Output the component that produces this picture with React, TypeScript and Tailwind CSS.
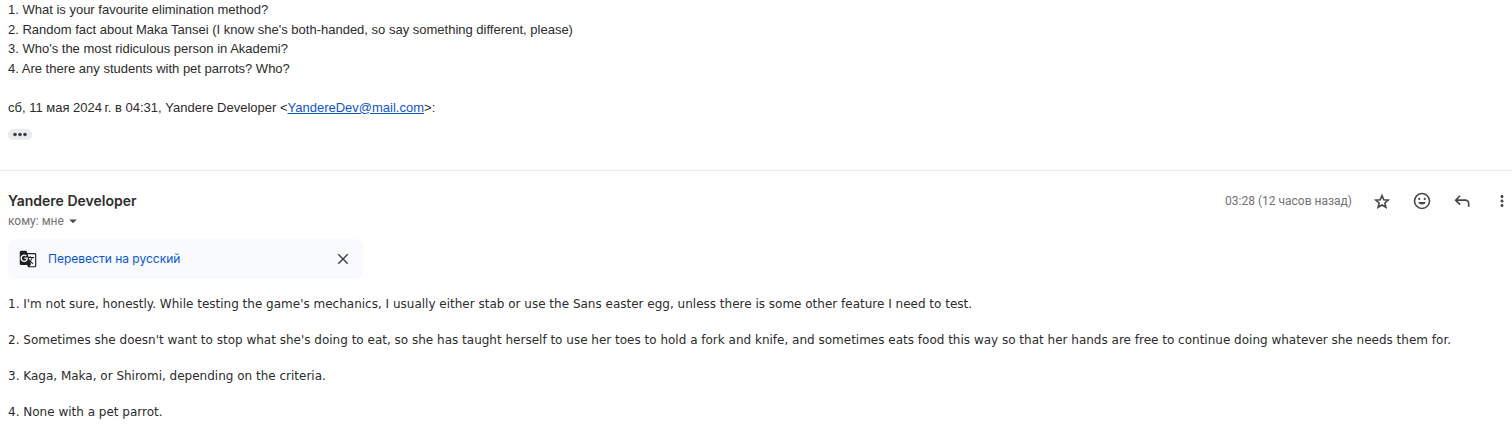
import type { ReactNode } from "react";
import { MdArrowDropDown, MdClose, MdGTranslate, MdMoreVert } from "react-icons/md";

const questions = [
  "1. What is your favourite elimination method?",
  "2. Random fact about Maka Tansei (I know she's both-handed, so say something different, please)",
  "3. Who's the most ridiculous person in Akademi?",
  "4. Are there any students with pet parrots? Who?",
];

const answers = [
  "1. I'm not sure, honestly. While testing the game's mechanics, I usually either stab or use the Sans easter egg, unless there is some other feature I need to test.",
  "2. Sometimes she doesn't want to stop what she's doing to eat, so she has taught herself to use her toes to hold a fork and knife, and sometimes eats food this way so that her hands are free to continue doing whatever she needs them for.",
  "3. Kaga, Maka, or Shiromi, depending on the criteria.",
  "4. None with a pet parrot.",
];

function IconButton({ label, children }: { label: string; children: ReactNode }) {
  return (
    <button type="button" aria-label={label} className="flex size-5 items-center justify-center text-[#444746]">
      {children}
    </button>
  );
}

function StarIcon() {
  return (
    <svg viewBox="0 0 20 20" className="size-5" fill="none" stroke="currentColor" strokeWidth="1.6" aria-hidden="true">
      <path d="M10 4.6l1.8 4.1 4.4.4-3.3 2.9 1 4.3-3.9-2.3-3.9 2.3 1-4.3-3.3-2.9 4.4-.4Z" />
    </svg>
  );
}

function SmileIcon() {
  return (
    <svg viewBox="0 0 24 24" className="size-5" fill="currentColor" aria-hidden="true">
      <circle cx="12" cy="12" r="9" fill="none" stroke="currentColor" strokeWidth="1.9" />
      <circle cx="8.7" cy="9.5" r="1.3" />
      <circle cx="15.3" cy="9.5" r="1.3" />
      <path d="M7.4 13.3h9.2a4.8 4.2 0 0 1-9.2 0Z" />
    </svg>
  );
}

function ReplyIcon() {
  return (
    <svg viewBox="0 0 24 24" className="size-5" fill="currentColor" aria-hidden="true">
      <path d="M19 19v-4a3 3 0 0 0-3-3H6.825l3.6 3.6L9 17l-6-6 6-6 1.425 1.4-3.6 3.6H16a5 5 0 0 1 5 5v4h-2Z" />
    </svg>
  );
}

function QuotedMessage() {
  return (
    <section className="px-2 pb-[30px] font-['Liberation_Sans',Arial,sans-serif] text-[13px] leading-normal">
      {questions.map((q) => (
        <p key={q}>{q}</p>
      ))}
      <br />
      <p>
        сб, 11 мая 2024&#8239;г. в 04:31, Yandere Developer &lt;
        <a href="mailto:YandereDev@mail.com" className="text-[#1155cc] underline">
          YandereDev@mail.com
        </a>
        &gt;:
      </p>
      <button
        type="button"
        aria-label="Показать скрытый текст"
        className="mt-3 flex h-[11px] w-6 items-center justify-center rounded-full bg-[#e8eaed] text-[#3c4043]"
      >
        <svg viewBox="0 0 16 5" className="h-[5px] w-4" fill="currentColor" aria-hidden="true">
          <circle cx="3" cy="2.5" r="1.8" />
          <circle cx="8" cy="2.5" r="1.8" />
          <circle cx="13" cy="2.5" r="1.8" />
        </svg>
      </button>
    </section>
  );
}

function MessageHeader() {
  return (
    <header className="flex items-start justify-between pt-5 pl-2">
      <div>
        <h3 className="text-sm leading-5 font-semibold text-[#2e2e2e]">Yandere Developer</h3>
        <button type="button" className="flex h-5 items-center font-[Roboto,sans-serif] text-xs text-[#737373]">
          кому: мне
          <MdArrowDropDown className="size-[18px] text-[#444746]" />
        </button>
      </div>
      <div className="flex items-center gap-5">
        <time className="font-[Roboto,sans-serif] text-xs leading-5 text-[#737373]">03:28 (12 часов назад)</time>
        <IconButton label="Пометить">
          <StarIcon />
        </IconButton>
        <IconButton label="Добавить реакцию">
          <SmileIcon />
        </IconButton>
        <IconButton label="Ответить">
          <ReplyIcon />
        </IconButton>
        <IconButton label="Ещё">
          <MdMoreVert className="size-[18px]" />
        </IconButton>
      </div>
    </header>
  );
}

export default function App() {
  return (
    <main className="overflow-x-hidden bg-white font-[Inter,sans-serif] text-[#2c2c2c]">
      <QuotedMessage />
      <article className="border-t border-[#ebebeb]">
        <MessageHeader />
        <div className="mt-2 ml-2 flex h-10 max-w-[355px] items-center rounded-lg bg-[#f8fafd] px-[11px]">
          <MdGTranslate className="size-[18px] text-[#1f1f1f]" />
          <button type="button" className="ml-[11px] text-xs text-[#0b57d0]">
            Перевести на русский
          </button>
          <button type="button" aria-label="Закрыть" className="ml-auto text-[#444746]">
            <MdClose className="size-[18px]" />
          </button>
        </div>
        <div className="flex flex-col gap-[18px] px-2 pt-4 pb-3 font-[Verdana,'DejaVu_Sans',sans-serif] text-xs leading-[18px]">
          {answers.map((a) => (
            <p key={a}>{a}</p>
          ))}
        </div>
      </article>
    </main>
  );
}
